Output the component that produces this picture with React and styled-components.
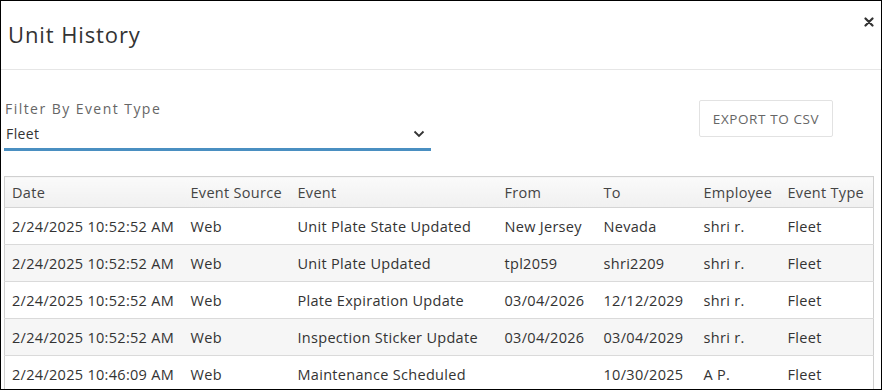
import React from "react";
import styled, { createGlobalStyle } from "styled-components";

const Global = createGlobalStyle`
  html, body { margin: 0; padding: 0; background: #fff; }
  body { font-family: "Open Sans", "Liberation Sans", sans-serif; }
  * { box-sizing: border-box; }
`;

const Frame = styled.div`
  width: 882px;
  height: 390px;
  border: 1px solid #000;
  overflow: hidden;
  background: #fff;
  display: flex;
  flex-direction: column;
`;

const Header = styled.div`
  height: 69px;
  flex: none;
  display: flex;
  align-items: flex-start;
  justify-content: space-between;
  border-bottom: 1px solid #e6e6e6;
  padding: 18px 6px 0 7px;
`;

const Title = styled.h1`
  margin: 0;
  font-size: 22px;
  font-weight: 400;
  color: #333;
  line-height: 30px;
  letter-spacing: 0.9px;
`;

const Close = styled.button`
  border: none;
  background: none;
  padding: 0;
  margin-top: -3px;
  width: 12px;
  height: 12px;
  display: flex;
  align-items: center;
  justify-content: center;
  color: #333;
  cursor: pointer;
`;

const Body = styled.div`
  padding: 0 7px 0 3px;
  display: flex;
  flex-direction: column;
`;

const Toolbar = styled.div`
  display: flex;
  justify-content: space-between;
  align-items: flex-start;
  padding-top: 30px;
  height: 106px;
`;

const Field = styled.div`
  width: 427px;
  display: flex;
  flex-direction: column;
`;

const Label = styled.label`
  font-size: 14px;
  color: #666;
  line-height: 18px;
  letter-spacing: 1.45px;
  padding-left: 1px;
`;

const Select = styled.div`
  display: flex;
  align-items: center;
  justify-content: space-between;
  height: 33px;
  padding: 1px 6px 0 2px;
  font-size: 14px;
  letter-spacing: 0.4px;
  color: #333;
  border-bottom: 3px solid #4a8fc1;
`;

const ExportButton = styled.button`
  margin-top: 0;
  margin-right: 41px;
  width: 134px;
  height: 37px;
  border: 1px solid #e2e2e2;
  border-radius: 2px;
  background: #fff;
  font-family: inherit;
  font-size: 13.5px;
  letter-spacing: 0.6px;
  color: #666;
  padding: 0;
`;

const Table = styled.table`
  width: 869px;
  border-collapse: collapse;
  table-layout: fixed;
  border: 1px solid #d0d0d0;
  font-size: 14.5px;
  letter-spacing: 0.3px;
`;

const Th = styled.th`
  text-align: left;
  font-weight: 400;
  color: #444;
  height: 31px;
  padding: 0 7px;
  background: linear-gradient(#fafafa, #f0f0f0);
  border-bottom: 1px solid #d4d4d4;
  white-space: nowrap;
  overflow: hidden;
`;

const Tr = styled.tr`
  background: ${(p) => (p.$alt ? "#f6f6f6" : "#fff")};
`;

const Td = styled.td`
  height: 37px;
  padding: 0 7px;
  color: #333;
  border-bottom: 1px solid #dadada;
  white-space: nowrap;
  overflow: hidden;
`;

const columns = [
  { key: "date", label: "Date", width: 179 },
  { key: "source", label: "Event Source", width: 107 },
  { key: "event", label: "Event", width: 207 },
  { key: "from", label: "From", width: 99 },
  { key: "to", label: "To", width: 100 },
  { key: "employee", label: "Employee", width: 84 },
  { key: "type", label: "Event Type", width: 93 },
];

const rows = [
  { date: "2/24/2025 10:52:52 AM", source: "Web", event: "Unit Plate State Updated", from: "New Jersey", to: "Nevada", employee: "shri r.", type: "Fleet" },
  { date: "2/24/2025 10:52:52 AM", source: "Web", event: "Unit Plate Updated", from: "tpl2059", to: "shri2209", employee: "shri r.", type: "Fleet" },
  { date: "2/24/2025 10:52:52 AM", source: "Web", event: "Plate Expiration Update", from: "03/04/2026", to: "12/12/2029", employee: "shri r.", type: "Fleet" },
  { date: "2/24/2025 10:52:52 AM", source: "Web", event: "Inspection Sticker Update", from: "03/04/2026", to: "03/04/2029", employee: "shri r.", type: "Fleet" },
  { date: "2/24/2025 10:46:09 AM", source: "Web", event: "Maintenance Scheduled", from: "", to: "10/30/2025", employee: "A P.", type: "Fleet" },
];

export default function App() {
  return (
    <>
      <Global />
      <Frame>
        <Header>
          <Title>Unit History</Title>
          <Close aria-label="Close">
            <svg width="10" height="10" viewBox="0 0 10 10">
              <path d="M1.5 1.5 L8.5 8.5 M8.5 1.5 L1.5 8.5" stroke="#333" strokeWidth="2.2" strokeLinecap="round" />
            </svg>
          </Close>
        </Header>
        <Body>
          <Toolbar>
            <Field>
              <Label>Filter By Event Type</Label>
              <Select>
                <span>Fleet</span>
                <svg width="12" height="8" viewBox="0 0 12 8">
                  <path d="M1.5 1.5 L6 6 L10.5 1.5" fill="none" stroke="#333" strokeWidth="1.8" />
                </svg>
              </Select>
            </Field>
            <ExportButton>EXPORT TO CSV</ExportButton>
          </Toolbar>
          <Table>
            <colgroup>
              {columns.map((c) => (
                <col key={c.key} style={{ width: c.width }} />
              ))}
            </colgroup>
            <thead>
              <tr>
                {columns.map((c) => (
                  <Th key={c.key}>{c.label}</Th>
                ))}
              </tr>
            </thead>
            <tbody>
              {rows.map((r, i) => (
                <Tr key={i} $alt={i % 2 === 1}>
                  {columns.map((c) => (
                    <Td key={c.key}>{r[c.key]}</Td>
                  ))}
                </Tr>
              ))}
            </tbody>
          </Table>
        </Body>
      </Frame>
    </>
  );
}
